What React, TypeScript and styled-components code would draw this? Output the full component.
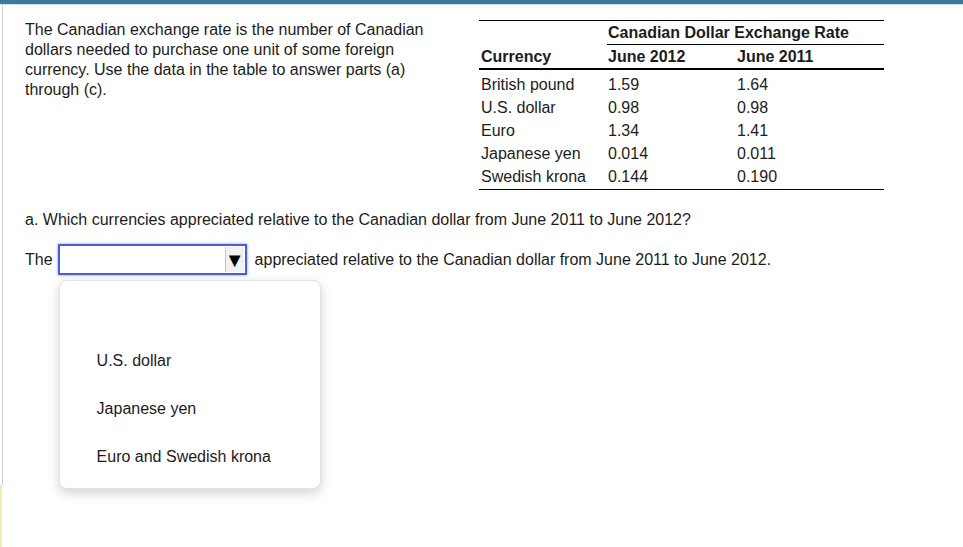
import React from "react";
import styled, { createGlobalStyle } from "styled-components";

// Data

const rates = [
  { name: "British pound", y2012: "1.59", y2011: "1.64" },
  { name: "U.S. dollar", y2012: "0.98", y2011: "0.98" },
  { name: "Euro", y2012: "1.34", y2011: "1.41" },
  { name: "Japanese yen", y2012: "0.014", y2011: "0.011" },
  { name: "Swedish krona", y2012: "0.144", y2011: "0.190" },
];

const options = ["", "U.S. dollar", "Japanese yen", "Euro and Swedish krona"];

// Styled Components

const GlobalStyle = createGlobalStyle`
  body {
    margin: 0;
    background: #fff;
    font-family: "Liberation Sans", Arial, sans-serif;
    color: #1c1c1c;
  }
`;

const TopBar = styled.div`
  height: 4px;
  background: #3b7a9f;
  border-bottom: 1px solid #d3dbe3;
`;

const Frame = styled.div`
  display: flex;
  height: 542px;
`;

const Rail = styled.div`
  width: 3px;
  display: flex;
  flex-direction: column;
  flex-shrink: 0;
`;

const RailLine = styled.div`
  flex: 0 0 480px;
  margin-left: 2px;
  width: 1px;
  background: #c9d1db;
`;

const RailNote = styled.div`
  flex: 1;
  width: 2px;
  background: #f6ecb8;
`;

const Content = styled.div`
  flex: 1;
  padding: 15px 0 0 21px;
  font-size: 16px;
`;

const Intro = styled.div`
  display: flex;
  align-items: flex-start;
`;

const Lead = styled.p`
  margin: 0;
  padding-left: 1px;
  width: 414px;
  line-height: 20px;
  flex-shrink: 0;
`;

const RateTable = styled.div`
  margin: 0 0 0 40px;
  width: 405px;
  display: grid;
  grid-template-columns: 128px 129px 148px;
  border-top: 1px solid #000;
  border-bottom: 1px solid #000;
  padding-bottom: 1px;
`;

const Cell = styled.div<{ $bold?: boolean; $pad?: number }>`
  height: 23px;
  line-height: 23px;
  padding-left: ${(p) => p.$pad ?? 2}px;
  font-weight: ${(p) => (p.$bold ? 700 : 400)};
  white-space: nowrap;
`;

const GroupHead = styled(Cell)`
  grid-column: 2 / 4;
  border-bottom: 1px solid #000;
`;

const HeadCell = styled(Cell)`
  border-bottom: 2px solid #000;
  margin-bottom: 3px;
`;

const Question = styled.p`
  margin: 20px 0 0;
  padding-left: 1px;
  line-height: 20px;
`;

const AnswerRow = styled.div`
  margin-top: 14px;
  display: flex;
  align-items: center;
  padding-left: 1px;
  line-height: 20px;
`;

const AnswerLabel = styled.span`
  margin-right: 5px;
`;

const SelectWrap = styled.div`
  position: relative;
  margin-right: 8px;
`;

const SelectBox = styled.div`
  box-sizing: border-box;
  width: 189px;
  height: 31px;
  border: 2px solid #4b5fd4;
  box-shadow: 0 0 3px #8b98e8;
  background: #fff;
  display: flex;
  justify-content: flex-end;
  align-items: stretch;
  padding: 1px;
`;

const ArrowButton = styled.div`
  width: 18px;
  background: #f1f1f1;
  border-left: 1px solid #c8c8c8;
  display: flex;
  align-items: center;
  justify-content: center;
  font-size: 20px;
  line-height: 1;
  color: #000;
`;

const Menu = styled.ul`
  position: absolute;
  top: 36px;
  left: 1px;
  width: 262px;
  box-sizing: border-box;
  margin: 0;
  padding: 8px 0 7px;
  list-style: none;
  background: #fff;
  border: 1px solid #e2e2e2;
  border-radius: 8px;
  box-shadow: 0 4px 12px rgba(0, 0, 0, 0.18);
  z-index: 2;
`;

const MenuItem = styled.li`
  height: 48px;
  line-height: 48px;
  padding-left: 37px;
  font-size: 16px;
  color: #1c1c1c;
`;

// App

export default function App() {
  return (
    <>
      <GlobalStyle />
      <TopBar />
      <Frame>
        <Rail>
          <RailLine />
          <RailNote />
        </Rail>
        <Content>
          <Intro>
            <Lead>
              The Canadian exchange rate is the number of Canadian dollars
              needed to purchase one unit of some foreign currency. Use the
              data in the table to answer parts (a) through (c).
            </Lead>
            <RateTable>
              <Cell />
              <GroupHead $bold $pad={1}>
                Canadian Dollar Exchange Rate
              </GroupHead>
              <HeadCell $bold>Currency</HeadCell>
              <HeadCell $bold $pad={1}>
                June 2012
              </HeadCell>
              <HeadCell $bold $pad={1}>
                June 2011
              </HeadCell>
              {rates.map((r) => (
                <React.Fragment key={r.name}>
                  <Cell>{r.name}</Cell>
                  <Cell $pad={1}>{r.y2012}</Cell>
                  <Cell $pad={1}>{r.y2011}</Cell>
                </React.Fragment>
              ))}
            </RateTable>
          </Intro>
          <Question>
            a. Which currencies appreciated relative to the Canadian dollar
            from June 2011 to June 2012?
          </Question>
          <AnswerRow>
            <AnswerLabel>The</AnswerLabel>
            <SelectWrap>
              <SelectBox>
                <ArrowButton>▼</ArrowButton>
              </SelectBox>
              <Menu>
                {options.map((o, i) => (
                  <MenuItem key={i}>{o}</MenuItem>
                ))}
              </Menu>
            </SelectWrap>
            <span>
              appreciated relative to the Canadian dollar from June 2011 to
              June 2012.
            </span>
          </AnswerRow>
        </Content>
      </Frame>
    </>
  );
}
